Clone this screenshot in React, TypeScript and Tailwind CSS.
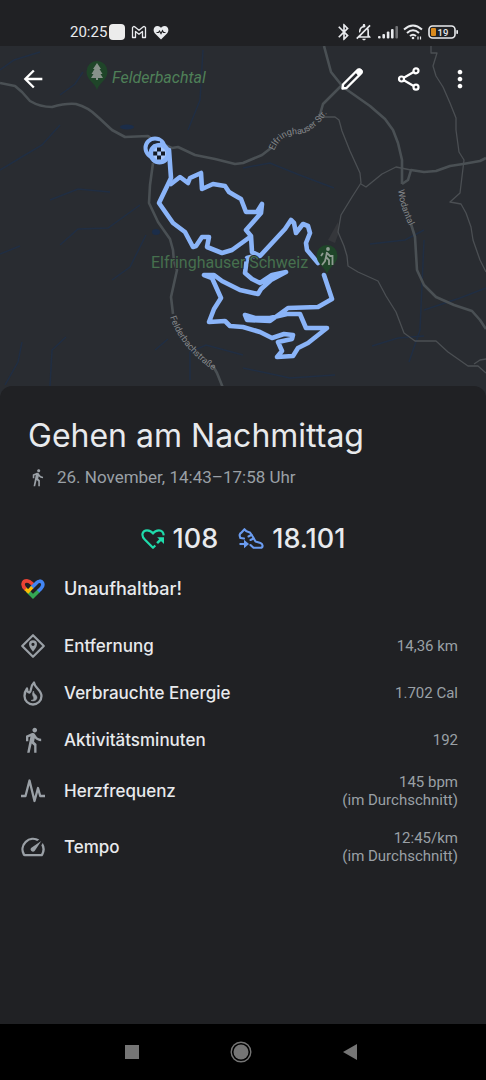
import type { ReactNode } from "react";
import { MdArrowBack, MdBluetooth, MdDirectionsWalk, MdMoreVert, MdOutlineNotificationsOff, MdSpeed } from "react-icons/md";

const MAIN_ROADS = [
  "M0 83 L15 86 L22 92 L30 101 Q40 107 52 107 Q66 103 76 104 Q88 107 98 117 L112 130 L125 137 L148 136 L155 141 L172 148 L178 147 L195 155 L215 159 L235 164 L243 163 L262 155 L271 148",
  "M319 118 L323 104 L342 85",
  "M324 46 L331 72 L343 87 L370 106 L385 119 L393 130 L398 143 L402 160 L402 184",
  "M402 184 L408 180 L411 170 L424 172 L436 171 L450 166 L463 164 L480 161 L486 158",
  "M411 224 L415 237 L417 270 L424 285 L436 297 L454 305 L472 311 L480 320 L486 329",
  "M153 163 L150 185 L149 203 L158 222 L170 239 L173 250 L174 262 L177 270 L171 297 L173 314",
  "M213 366 L217 373 L223 388",
];

const SIDE_ROADS = [
  "M321 117 L335 117 L339 120 L342 131 L350 151 L360 173 L361 183 L352 197 L341 215 L338 232 L344 246 L347 256 L348 266 L358 272 L378 281 L386 296 L396 312 L404 333 L415 341 L436 341 L448 352 L468 366 L478 366 L486 373",
  "M361 184 L366 187 L382 174 L396 167 L411 170",
  "M474 364 L480 360 L486 359",
  "M431 46 L431 53 L437 53 L433 66 L436 76 L443 87 L450 103 L456 118 L456 130 L459 152 L464 160 L460 193 L450 202 L461 204 L466 213 L471 227 L473 240 L480 260 L486 272",
];

const STREAMS = [
  "M0 170 L20 158 L42 145 L60 125",
  "M50 200 L78 189 L110 192",
  "M60 245 L78 229 L108 228 L140 205",
  "M0 254 L20 246",
  "M112 280 L130 267 L146 235",
  "M50 386 L52 350 L66 337",
  "M5 385 L18 362 L22 342",
  "M0 70 L14 60 L40 52",
  "M60 95 L75 84 L83 72",
  "M188 130 L200 100 L203 50",
  "M243 168 L270 163 L297 174 L334 188",
  "M370 244 L405 240 L424 230",
  "M424 240 L420 330 L409 362",
  "M372 346 L398 338 L424 336",
  "M424 310 L460 298 L486 288",
  "M155 350 L168 339",
  "M190 380 L190 352 L206 345 L243 355",
  "M243 368 L290 378 L335 375",
];

const ROUTE = [
  "M169 150 L171 178 L159 203 L173 223 L185 232 L193 247 L196 246 L202 237 L209 237 L207 247 L222 253 L232 250 L250 237",
  "M171 184 L180 177 L188 183 L190 178 L201 173 L202 189 L213 184 L225 186 L229 192 L234 195 L241 199 L246 212 L257 212 L262 204 L261 213 L246 230 L251 236 L252 252 L260 256 L285 229 L291 220 L294 223 L296 233 L303 224 L308 226 L310 233 L306 243 L307 250 L318 263",
  "M324 275 L332 299 L318 307 L288 308 L270 321 L247 320 L245 315 L255 318 L270 318 L287 314 L300 314 L306 328 L327 328 L308 343 L298 348 L293 356 L277 357 L282 351 L278 342 L292 339 L293 335 L284 334 L272 338 L260 332 L243 327 L230 326 L225 321 L209 322 L214 309 L221 298 L212 278 L204 275 L214 275 L222 281 L240 290 L258 294 L261 289 L271 280 L286 272 L272 275 L260 283 L252 279 L245 273 L247 258 L258 255",
];

interface IconProps {
  className?: string;
}

function Pin({ x, y, children }: { x: number; y: number; children: ReactNode }) {
  return (
    <g transform={`translate(${x} ${y})`}>
      <path d="M0 17 C-2 10 -10.500 7 -10.500 -1.500 A10.500 10.500 0 0 1 10.500 -1.500 C10.500 7 2 10 0 17Z" fill="#1f4529" />
      {children}
    </g>
  );
}

function RouteMap() {
  return (
    <svg viewBox="0 46 486 350" preserveAspectRatio="xMidYMin slice" className="block h-full w-full bg-[#292c31] font-['Roboto',sans-serif]">
      <g fill="none" stroke="#202e43" strokeWidth="1.500">
        {STREAMS.map((d) => (
          <path key={d} d={d} />
        ))}
      </g>
      <ellipse cx="127" cy="127" rx="7" ry="2.500" fill="#1b2d49" />
      <ellipse cx="156" cy="232" rx="4" ry="3" fill="#1b2d49" />
      <path d="M338 222 L328 240 L335 243 L339 232Z" fill="#35373b" />
      <g fill="none" strokeLinejoin="round">
        {SIDE_ROADS.map((d) => (
          <path key={d} d={d} stroke="#4b4f53" strokeWidth="1.300" />
        ))}
        {MAIN_ROADS.map((d) => (
          <path key={d} d={d} stroke="#4a5054" strokeWidth="2.600" />
        ))}
      </g>

      <g fill="#85888b" fontSize="9">
        <path id="elfringhauser" d="M274 151 Q281 134 298 134 Q312 134 328 112" fill="none" />
        <path id="wodantal" d="M398 190 Q400 208 412 232" fill="none" />
        <path id="felderbach" d="M170 317 Q180 348 218 374" fill="none" />
        <text>
          <textPath href="#elfringhauser">Elfringhauser Str.</textPath>
        </text>
        <text>
          <textPath href="#wodantal">Wodantal</textPath>
        </text>
        <text>
          <textPath href="#felderbach">Felderbachstraße</textPath>
        </text>
      </g>

      <g fill="none" stroke="#8ab4f8" strokeWidth="4.600" strokeLinejoin="round" strokeLinecap="round">
        {ROUTE.map((d) => (
          <path key={d} d={d} />
        ))}
      </g>
      <circle cx="155" cy="148" r="9.500" fill="#202631" stroke="#8ab4f8" strokeWidth="4" />
      <circle cx="159.500" cy="153.500" r="11" fill="#8ab4f8" />
      <path d="M148.500 147 Q151 140.500 160 142 Q153 142.500 148.500 147Z" fill="#202631" stroke="#202631" strokeWidth="1" />
      <circle cx="159.500" cy="153.500" r="6.500" fill="#a9c8fb" />
      <path d="M157 147.500h4v4h-4zM153.200 151.500h4v4h-4zM161 151.500h4v4h-4zM157 155.500h4v4h-4z" fill="#141a24" />

      <g stroke="#292c31" strokeWidth="2" paintOrder="stroke" fill="#4f8058" fontSize="16">
        <text x="112" y="83" fontStyle="italic">
          Felderbachtal
        </text>
        <text x="151" y="268" fill="#46704e">
          Elfringhauser Schweiz
        </text>
      </g>
      <Pin x={97} y={73}>
        <path d="M0 -10 L-4 -4 H-2.500 L-5.500 1 H-3.500 L-6 5 H-1 V7 H1 V5 H6 L3.500 1 H5.500 L2.500 -4 H4Z" fill="#87918a" />
      </Pin>
      <Pin x={327} y={257}>
        <circle cx="1" cy="-8" r="1.900" fill="#8f9c92" />
        <path d="M0 -5 L-1 0 L2 3 L2 8 M-1 0 L-2 4 L-5 8 M0 -4 L3 -1 L6 -1 M5.500 -2 V8 M-4 -4 L-6 -1" fill="none" stroke="#8f9c92" strokeWidth="1.800" />
      </Pin>
    </svg>
  );
}

function StatusBar() {
  return (
    <div className="flex h-[46px] shrink-0 items-end justify-between bg-[#202124] pr-7 pb-1 pl-[70px] font-['Roboto',sans-serif] text-[#e8eaed]">
      <div className="flex h-5 items-center">
        <span className="w-[39px] text-[15px] leading-5">20:25</span>
        <span className="size-4 rounded bg-[#ececec]" />
        <svg viewBox="0 0 16 14" className="ml-1.5 h-3.5 w-4" fill="none" stroke="currentColor" strokeWidth="1.300" strokeLinejoin="round">
          <path d="M1.500 12.500 V2.500 Q2.500 .8 4 2 L8 5.300 L12 2 Q13.500 .8 14.500 2.500 V12.500 H11.500 V6.500 L8 9.300 L4.500 6.500 V12.500Z" />
        </svg>
        <svg viewBox="0 0 16 15" className="ml-1.5 h-[15px] w-4">
          <path d="M8 14.500 L2 8.500 C-.5 6 .5 1 4.500 1 C6.500 1 7.500 2.200 8 3 C8.500 2.200 9.500 1 11.500 1 C15.500 1 16.500 6 14 8.500Z" fill="currentColor" />
          <path d="M3.500 7.500 H5.500 L6.500 6 L8 8.500 L9.500 5.800 L10.500 7.500 H12.500" fill="none" stroke="#202124" strokeWidth="1.200" />
        </svg>
      </div>
      <div className="flex h-5 items-center gap-1">
        <MdBluetooth className="-mr-1 size-5" />
        <MdOutlineNotificationsOff className="size-5 -scale-x-100" />
        <svg viewBox="0 0 21 14" className="h-3.5 w-[21px]" fill="currentColor">
          <rect x="0" y="11" width="2.600" height="2.500" rx="1" />
          <rect x="4.400" y="9" width="2.600" height="4.500" rx="1" />
          <rect x="8.800" y="6.500" width="2.600" height="7" rx="1" />
          <rect x="13" y="4" width="2.600" height="9.500" rx="1" />
          <rect x="17.400" y="1" width="2.600" height="12.500" rx="1" opacity=".4" />
        </svg>
        <svg viewBox="0 0 20 16" className="h-4 w-5" fill="none" stroke="currentColor" strokeWidth="2">
          <path d="M1 5.500 Q10 -2.500 19 5.500 M4 9 Q10 3.500 16 9 M7 12 Q10 9.500 13 12" />
          <circle cx="10" cy="14" r="1.300" fill="currentColor" stroke="none" />
          <path d="M15 15.500 V12.500 M17.500 12.500 V15.500" strokeWidth="1.200" />
        </svg>
        <svg viewBox="0 0 31 14" className="h-3.5 w-[31px]">
          <rect x="2" y="1" width="26" height="12" rx="3.500" fill="none" stroke="currentColor" strokeWidth="1.600" />
          <rect x="4" y="3" width="5" height="8" rx="1" fill="#d98a1e" />
          <rect x="29.300" y="5" width="1.700" height="4" rx=".8" fill="currentColor" />
          <text x="10.500" y="10.500" fontSize="9.500" fontWeight="500" fill="currentColor">
            19
          </text>
        </svg>
      </div>
    </div>
  );
}

function PencilIcon() {
  return (
    <svg viewBox="0 0 24 24" className="size-6" fill="none" stroke="currentColor" strokeLinejoin="round">
      <path d="M2.500 21.500 L3 17.500 L17 3.500 Q19 1.500 21 3.500 Q22.500 5 20.500 7 L6.500 21Z" strokeWidth="2.400" />
      <path d="M15.500 5 L18 2.500 Q20 1.200 21.800 3 Q23 4.500 21.500 6.500 L19 9Z" fill="currentColor" strokeWidth="1" />
    </svg>
  );
}

function ShareIcon() {
  return (
    <svg viewBox="0 0 24 24" className="size-6" fill="none" stroke="currentColor" strokeWidth="2.200">
      <circle cx="4.500" cy="12" r="2.500" />
      <circle cx="19" cy="3.800" r="2.500" />
      <circle cx="19" cy="20.200" r="2.500" />
      <path d="M6.800 10.700 L16.700 5 M6.800 13.300 L16.700 19" />
    </svg>
  );
}

function HeartPointsIcon() {
  return (
    <svg viewBox="0 0 26 24" className="h-[22px] w-6 text-[#1fdbab]" fill="none" stroke="currentColor" strokeWidth="2.400">
      <path d="M15.500 19 L13 21.500 L4 12.500 C-.5 8 1.500 2.500 6.500 2.500 C10 2.500 12 4.500 13 6 C14 4.500 16 2.500 19.500 2.500 C22.500 2.500 24.500 5 24.700 8" strokeLinejoin="round" />
      <path d="M17.500 16.500 L22.500 11.500" strokeWidth="2.800" />
      <path d="M17.500 10 H25 V17.500Z" fill="currentColor" stroke="none" />
    </svg>
  );
}

function StepsIcon() {
  return (
    <svg viewBox="0 0 26 24" className="h-6 w-[26px] text-[#6b9cf0]" fill="none" stroke="currentColor" strokeWidth="2.100" strokeLinejoin="round" strokeLinecap="round">
      <path d="M2.500 11 C1 8.500 1.500 6.500 3.500 5.500 L6.500 2.200 C8 5 10 5 12 5.500 L15 10 L17.500 14.500 L22.500 16 C25 17 25.500 20.500 22.500 20.800 H15.500 L12.500 18" />
      <path d="M10.500 9.500 L13.500 7.800 M12.500 13 L15.500 11.500 M2.500 11 L6 11.500" />
      <path d="M1.500 17 H7" strokeLinecap="butt" />
      <path d="M6 12.800 L11 17 L6 21.200Z" fill="currentColor" stroke="none" />
    </svg>
  );
}

function FitIcon() {
  return (
    <svg viewBox="0 0 24 20" className="h-5 w-6" fill="none" strokeWidth="3.600">
      <path d="M6 11.500 L12 17.400 L17.800 11.700" stroke="#34a853" />
      <path d="M4.900 10.400 C.5 6.500 1.500 1.900 6 1.900 C8.800 1.900 9.800 3.500 12.300 6" stroke="#ea4335" />
      <path d="M10.600 8.700 L15.200 4.200 C17.500 1.500 20.300 1.600 21.500 3.900 C22.700 6.700 21.300 8.300 19.800 9.800 L17.200 12.300" stroke="#4285f4" />
      <path d="M4.600 10.100 L7.200 12.400 L11.200 8.200" stroke="#fbbc04" strokeWidth="3.300" />
    </svg>
  );
}

function DistanceIcon({ className }: IconProps) {
  return (
    <svg viewBox="-2 -2 28 28" className={className}>
      <path d="M12 1.200 L22.800 12 L12 22.800 L1.200 12Z" fill="none" stroke="currentColor" strokeWidth="2.200" strokeLinejoin="round" />
      <path fillRule="evenodd" d="M12 17.800 C10.500 15.500 8 13 8 10.300 A4 4 0 0 1 16 10.300 C16 13 13.500 15.500 12 17.800Z M12 8.700 A1.600 1.600 0 1 0 12 11.900 A1.600 1.600 0 1 0 12 8.700Z" fill="currentColor" />
    </svg>
  );
}

function FlameIcon({ className }: IconProps) {
  return (
    <svg viewBox="0 0 28 28" className={className} fill="none" stroke="currentColor" strokeWidth="2.300" strokeLinejoin="round">
      <path d="M15 3.500 C15.500 9 22.500 11 22.500 17 A8.500 8.500 0 0 1 5.500 17 C5.500 13.500 6.500 11.500 8 9.500 C8 12.500 9 13.500 10.500 13.500 C13 12 10.500 8 15 3.500Z" />
      <path d="M14.500 12 C14 15.500 18.500 15.500 18 19 C17.500 21.500 14.500 22.500 12 21.500 C14.500 21 15.500 19.500 14.500 18 C13.500 16.500 13 14.500 14.500 12Z" fill="currentColor" strokeWidth=".6" />
    </svg>
  );
}

function PulseIcon({ className }: IconProps) {
  return (
    <svg viewBox="-2 -2 28 28" className={className} fill="none" stroke="currentColor" strokeWidth="2.300" strokeLinejoin="round">
      <path d="M0 17 H4.500 L8.500 1.500 L13.500 22 L17 9 L19.200 17 H24" />
    </svg>
  );
}

const METRICS = [
  { label: "Entfernung", value: "14,36 km", Icon: DistanceIcon },
  { label: "Verbrauchte Energie", value: "1.702 Cal", Icon: FlameIcon },
  { label: "Aktivitätsminuten", value: "192", Icon: MdDirectionsWalk },
  { label: "Herzfrequenz", value: "145 bpm", note: "(im Durchschnitt)", Icon: PulseIcon },
  { label: "Tempo", value: "12:45/km", note: "(im Durchschnitt)", Icon: MdSpeed },
];

function NavigationBar() {
  return (
    <nav className="flex h-14 shrink-0 items-center justify-center gap-[61px] bg-black pr-1 text-[#757575]">
      <button type="button" aria-label="Übersicht" className="flex size-12 items-center justify-center">
        <span className="size-3.5 bg-current" />
      </button>
      <button type="button" aria-label="Startbildschirm" className="flex size-12 items-center justify-center">
        <svg viewBox="0 0 22 22" className="size-[22px]">
          <circle cx="11" cy="11" r="9.800" fill="none" stroke="currentColor" strokeWidth="1.400" />
          <circle cx="11" cy="11" r="7.500" fill="currentColor" />
        </svg>
      </button>
      <button type="button" aria-label="Zurück" className="flex size-12 items-center justify-center">
        <svg viewBox="0 0 14 16" className="h-4 w-3.5" fill="currentColor">
          <path d="M0 8 L14 0 V16Z" />
        </svg>
      </button>
    </nav>
  );
}

export default function App() {
  return (
    <div className="flex min-h-screen flex-col bg-[#202124] text-[#e8eaed]">
      <StatusBar />

      <header className="relative h-[350px] shrink-0">
        <RouteMap />
        <div className="absolute inset-x-0 top-0 flex h-[66px] items-center justify-between pr-3 pl-[19px] text-white">
          <button type="button" aria-label="Zurück">
            <MdArrowBack className="size-7" />
          </button>
          <div className="flex items-center gap-[33px]">
            <button type="button" aria-label="Bearbeiten">
              <PencilIcon />
            </button>
            <button type="button" aria-label="Teilen">
              <ShareIcon />
            </button>
            <button type="button" aria-label="Weitere Optionen" className="-ml-2">
              <MdMoreVert className="size-7" />
            </button>
          </div>
        </div>
      </header>

      <main className="relative -mt-2.5 flex-1 rounded-t-xl bg-[#202124] font-['Inter',sans-serif]">
        <div className="px-7 pt-[30px]">
          <h1 className="text-[32px] leading-10">Gehen am Nachmittag</h1>
          <p className="mt-[11px] flex items-center gap-2.5 font-['Roboto',sans-serif] text-[17px] leading-5 text-[#9aa0a6]">
            <MdDirectionsWalk className="size-[19px]" />
            26. November, 14:43–17:58 Uhr
          </p>
        </div>

        <div className="mt-8 flex items-center justify-center gap-5 text-[27px] leading-10 font-medium">
          <span className="flex items-center gap-2">
            <HeartPointsIcon />
            108
          </span>
          <span className="flex items-center gap-2">
            <StepsIcon />
            18.101
          </span>
        </div>

        <p className="mt-[18px] mb-[21px] flex items-center gap-[19px] pl-[21px] text-lg leading-6 font-medium">
          <FitIcon />
          Unaufhaltbar!
        </p>

        <dl>
          {METRICS.map(({ label, value, note, Icon }) => (
            <div key={label} className="flex min-h-[47px] items-center justify-between py-2.5 pr-7 pl-[19px]">
              <dt className="flex items-center gap-[17px] text-[17px] leading-6 font-medium">
                <Icon className="-my-0.5 size-7 text-[#9aa0a6]" />
                {label}
              </dt>
              <dd className="text-right font-['Roboto',sans-serif] text-[15px] leading-[18px] text-[#9aa0a6]">
                {value}
                {note && <span className="block">{note}</span>}
              </dd>
            </div>
          ))}
        </dl>
      </main>

      <NavigationBar />
    </div>
  );
}
